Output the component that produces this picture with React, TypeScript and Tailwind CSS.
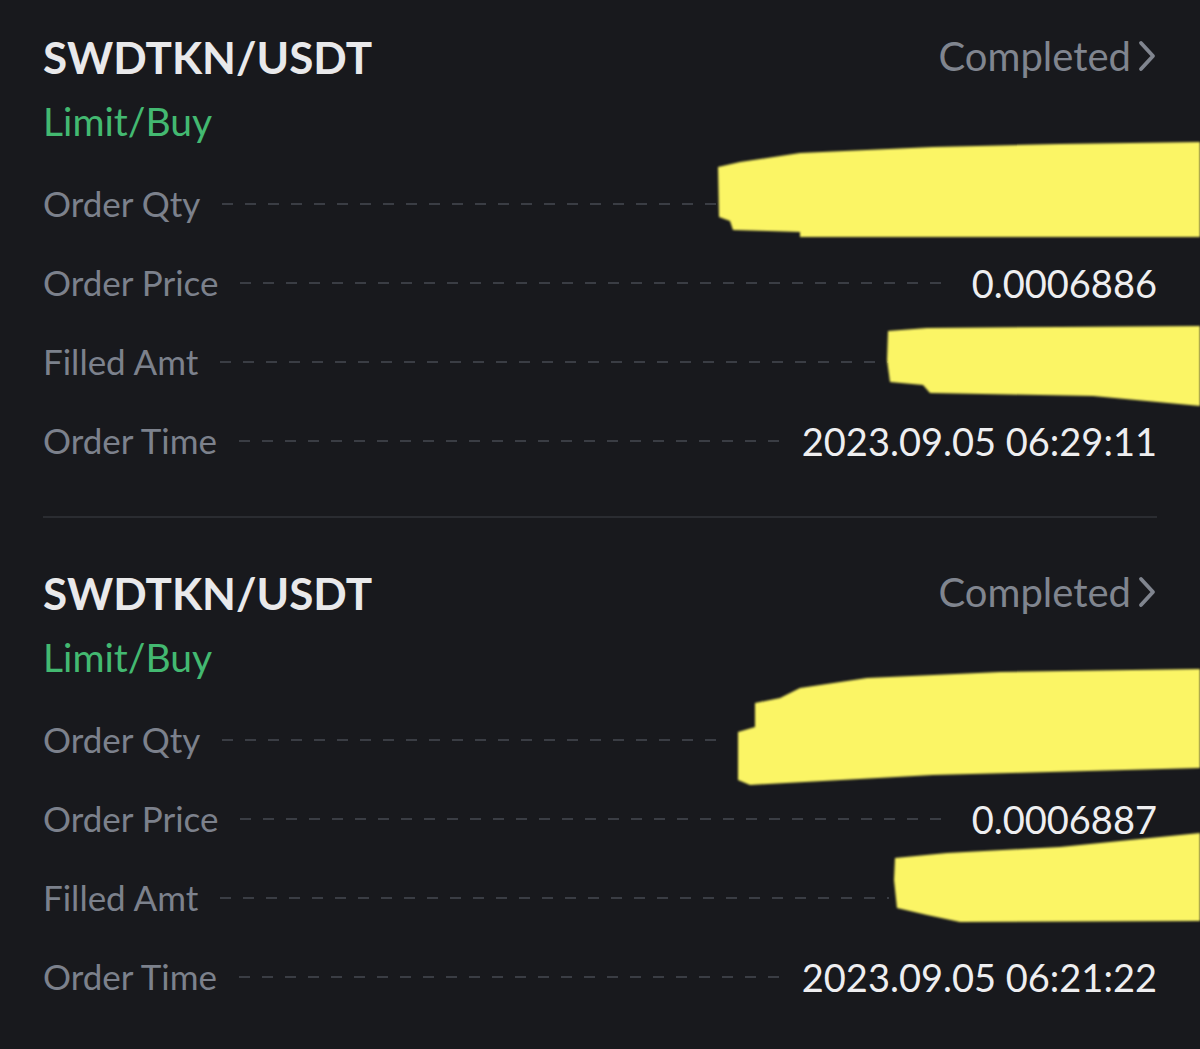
import React from "react";

const FONT = { fontFamily: "Lato, 'Open Sans', sans-serif" };

type Row = { label: string; value?: string; hiddenW?: number };

function Scribble({ d, left, top, w, h }: { d: string; left: number; top: number; w: number; h: number }) {
  return (
    <svg
      className="absolute pointer-events-none"
      style={{ left, top }}
      width={w}
      height={h}
      viewBox={`${left} ${top} ${w} ${h}`}
    >
      <path d={d} fill="#fbf565" style={{ filter: "blur(0.8px)" }} />
    </svg>
  );
}

function Card({ rows }: { rows: Row[] }) {
  return (
    <div className="flex flex-col">
      <div className="flex items-center justify-between h-[50px]">
        <span className="text-[44px] font-bold text-[#e9e9eb] leading-none">SWDTKN/USDT</span>
        <span className="flex items-center text-[40px] text-[#80858f] leading-none -mt-[3px]">
          Completed
          <svg width="20" height="36" viewBox="0 0 20 36" className="ml-[6px]">
            <path d="M4 5 L16 18 L4 31" fill="none" stroke="#80858f" strokeWidth="3.8" strokeLinecap="round" strokeLinejoin="round" />
          </svg>
        </span>
      </div>
      <div className="flex items-center h-[50px] mt-[14px]">
        <span className="text-[39px] text-[#43b971] leading-none">Limit/Buy</span>
      </div>
      <div className="flex flex-col mt-[18px]">
        {rows.map((r) => (
          <div key={r.label} className="flex items-center h-[79px]">
            <span className="text-[35px] text-[#7c818c] leading-none">{r.label}</span>
            <div className="flex-1 h-[2px] mx-[22px] bg-[repeating-linear-gradient(90deg,#3a3d44_0_11px,transparent_11px_23px)]" />
            {r.value ? (
              <span className="text-[38px] text-[#eeeef0] leading-none">{r.value}</span>
            ) : (
              <span className="inline-block" style={{ width: r.hiddenW }} />
            )}
          </div>
        ))}
      </div>
    </div>
  );
}

export default function App() {
  return (
    <div className="relative w-[1200px] h-[1049px] overflow-hidden bg-[#18191d]" style={FONT}>
      <div className="flex flex-col px-[43px] pt-[32px]">
        <Card
          rows={[
            { label: "Order Qty", hiddenW: 414 },
            { label: "Order Price", value: "0.0006886" },
            { label: "Filled Amt", hiddenW: 246 },
            { label: "Order Time", value: "2023.09.05 06:29:11" },
          ]}
        />
        <div className="h-[2px] bg-[#2a2c31] mt-[36px] mb-[50px]" />
        <Card
          rows={[
            { label: "Order Qty", hiddenW: 414 },
            { label: "Order Price", value: "0.0006887" },
            { label: "Filled Amt", hiddenW: 246 },
            { label: "Order Time", value: "2023.09.05 06:21:22" },
          ]}
        />
      </div>

      <Scribble
        left={700}
        top={130}
        w={500}
        h={120}
        d="M718 167 L740 162 L800 153 L933 147 L1060 144 L1200 142 L1200 237 L1000 237 L800 237 L800 232 L733 230 L730 221 L719 217 Z"
      />
      <Scribble
        left={870}
        top={315}
        w={330}
        h={100}
        d="M888 331 L927 328 L1060 327 L1200 326 L1200 406 L1093 396 L930 393 L923 385 L890 382 L887 360 Z"
      />
      <Scribble
        left={720}
        top={660}
        w={480}
        h={135}
        d="M755 703 L780 698 L800 688 L867 678 L1000 672 L1200 669 L1200 768 L933 775 L750 785 L738 780 L738 732 L755 727 Z"
      />
      <Scribble
        left={880}
        top={825}
        w={320}
        h={105}
        d="M895 858 L947 853 L1060 847 L1200 833 L1200 921 L960 922 L927 915 L897 908 L894 880 Z"
      />
    </div>
  );
}
